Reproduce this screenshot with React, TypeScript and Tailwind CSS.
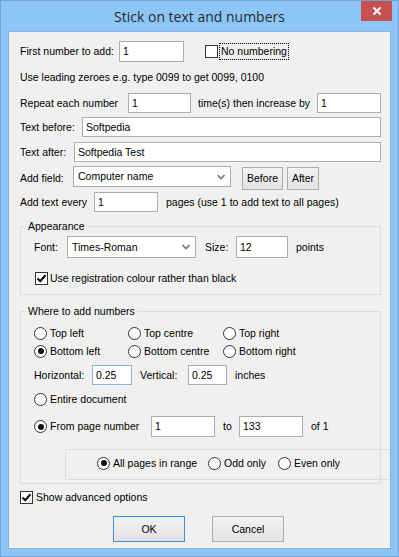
import type { ReactNode } from 'react';

const Box = ({ w, value, focus, flex }: { w?: string; value: string; focus?: boolean; flex?: boolean }) => (
  <div
    className={`h-full bg-white border ${focus ? 'border-[#7eb4ea]' : 'border-[#abadb3]'} flex items-center pl-[3px] ${flex ? 'flex-1' : ''} ${w ?? ''}`}
  >
    {value}
  </div>
);

const Select = ({ w, value }: { w: string; value: string }) => (
  <div className={`h-full bg-white border border-[#acacac] flex items-center justify-between pl-[4px] pr-[5px] ${w}`}>
    <span>{value}</span>
    <svg width="8" height="6" viewBox="0 0 8 6">
      <path d="M0.5 1 L4 4.5 L7.5 1" stroke="#7a7a7a" strokeWidth="1.6" fill="none" />
    </svg>
  </div>
);

const Check = ({ on }: { on?: boolean }) => (
  <span className="w-[13px] h-[13px] bg-white border border-[#333] flex items-center justify-center shrink-0">
    {on && (
      <svg width="11" height="11" viewBox="0 0 11 11">
        <path d="M1.5 5.5 L4.2 8.2 L9.5 2.2" stroke="#111" strokeWidth="2.2" fill="none" />
      </svg>
    )}
  </span>
);

const Radio = ({ on, children, w }: { on?: boolean; children: ReactNode; w?: string }) => (
  <div className={`flex items-center h-[14px] ${w ?? ''}`}>
    <span className="w-[13px] h-[13px] rounded-full bg-white border border-[#333] flex items-center justify-center shrink-0">
      {on && <span className="w-[6px] h-[6px] rounded-full bg-[#111]" />}
    </span>
    <span className="ml-[3px] whitespace-nowrap">{children}</span>
  </div>
);

const Btn = ({ w, children, primary, cls }: { w: string; children: ReactNode; primary?: boolean; cls?: string }) => (
  <div
    className={`h-full ${w} border ${primary ? 'border-[#3c8ee0]' : 'border-[#acacac]'} bg-gradient-to-b from-[#f2f2f2] to-[#e3e3e3] flex items-center justify-center ${cls ?? ''}`}
  >
    {children}
  </div>
);

export default function App() {
  return (
    <div className="w-[399px] h-[557px] bg-[#8cc6f7] border border-[#6fa6d4] flex flex-col overflow-hidden font-['Liberation_Sans',Arial,sans-serif] text-[10.5px] text-black leading-none">
      {/* title bar */}
      <div className="relative h-[30px] shrink-0 flex items-center justify-center">
        <span className="font-['Open_Sans',sans-serif] text-[14px] text-[#2a2a2a] mt-[1px]">Stick on text and numbers</span>
        <div className="absolute right-[6px] top-[-1px] w-[31px] h-[21px] bg-[#c75050] flex items-center justify-center">
          <svg width="10" height="10" viewBox="0 0 10 10">
            <path d="M1.5 1.5 L8.5 8.5 M8.5 1.5 L1.5 8.5" stroke="#fff" strokeWidth="2" />
          </svg>
        </div>
      </div>

      {/* client area */}
      <div className="mx-[7px] h-[518px] bg-[#f0f0f0] border border-[#7fb2de] flex flex-col pl-[11px] pr-[9px] overflow-hidden">
        <div className="flex items-center h-[21px] mt-[9px]">
          <span className="w-[99px]">First number to add:</span>
          <Box w="w-[65px]" value="1" />
          <span className="ml-[21px]"><Check /></span>
          <span className="ml-[1px] border border-dotted border-black px-[1px] h-[17px] flex items-center">No numbering</span>
        </div>

        <div className="flex items-center h-[18px] mt-[6px]">Use leading zeroes e.g. type 0099 to get 0099, 0100</div>

        <div className="flex items-center h-[20px] mt-[7px]">
          <span className="w-[108px]">Repeat each number</span>
          <Box w="w-[63px]" value="1" />
          <span className="ml-[7px] w-[119px]">time(s) then increase by</span>
          <Box w="w-[64px]" value="1" />
        </div>

        <div className="flex items-center h-[20px] mt-[4px]">
          <span className="w-[62px]">Text before:</span>
          <Box flex value="Softpedia" />
        </div>

        <div className="flex items-center h-[20px] mt-[5px]">
          <span className="w-[54px]">Text after:</span>
          <Box flex value="Softpedia Test" />
        </div>

        <div className="flex items-start h-[24px] mt-[4px]">
          <span className="w-[53px] self-center mt-[1px]">Add field:</span>
          <div className="h-[21px]"><Select w="w-[158px]" value="Computer name" /></div>
          <div className="h-[23px] mt-[1px] ml-[11px]"><Btn w="w-[41px]">Before</Btn></div>
          <div className="h-[23px] mt-[1px] ml-[4px]"><Btn w="w-[32px]">After</Btn></div>
        </div>

        <div className="flex items-center h-[20px] mt-[2px]">
          <span className="w-[74px]">Add text every</span>
          <Box w="w-[64px]" value="1" />
          <span className="ml-[8px]">pages (use 1 to add text to all pages)</span>
        </div>

        {/* Appearance */}
        <fieldset className="mt-[7px] border border-[#dcdcdc] pb-[9px]">
          <legend className="ml-[5px] px-[2px] leading-[14px]">Appearance</legend>
          <div className="flex items-center h-[22px] mt-[3px] pl-[13px]">
            <span className="w-[33px]">Font:</span>
            <Select w="w-[129px]" value="Times-Roman" />
            <span className="ml-[9px] w-[31px]">Size:</span>
            <Box w="w-[52px]" value="12" />
            <span className="ml-[8px]">points</span>
          </div>
          <div className="flex items-center h-[13px] mt-[14px] pl-[14px]">
            <Check on />
            <span className="ml-[2px]">Use registration colour rather than black</span>
          </div>
        </fieldset>

        {/* Where to add numbers */}
        <fieldset className="mt-[9px] border border-[#dcdcdc] pb-[3px] min-w-0">
          <legend className="ml-[5px] px-[2px] leading-[14px]">Where to add numbers</legend>
          <div className="pl-[13px] flex flex-col">
            <div className="flex mt-[8px]">
              <Radio w="w-[94px]">Top left</Radio>
              <Radio w="w-[95px]">Top centre</Radio>
              <Radio>Top right</Radio>
            </div>
            <div className="flex mt-[4px]">
              <Radio w="w-[94px]" on>Bottom left</Radio>
              <Radio w="w-[95px]">Bottom centre</Radio>
              <Radio>Bottom right</Radio>
            </div>
            <div className="flex items-center h-[20px] mt-[7px]">
              <span className="w-[58px]">Horizontal:</span>
              <Box w="w-[40px]" value="0.25" focus />
              <span className="ml-[8px] w-[48px]">Vertical:</span>
              <Box w="w-[39px]" value="0.25" />
              <span className="ml-[8px]">inches</span>
            </div>
            <div className="flex mt-[7px]">
              <Radio>Entire document</Radio>
            </div>
            <div className="flex items-center h-[21px] mt-[10px]">
              <Radio w="w-[117px]" on>From page number</Radio>
              <Box w="w-[64px]" value="1" />
              <span className="ml-[8px] w-[16px]">to</span>
              <Box w="w-[64px]" value="133" />
              <span className="ml-[8px]">of 1</span>
            </div>
          </div>
          <div className="ml-[44px] mt-[12px] w-[326px] h-[31px] border border-r-0 border-[#dcdcdc] pl-[31px] pt-[6px] flex items-start">
            <Radio w="w-[111px]" on>All pages in range</Radio>
            <Radio w="w-[70px]">Odd only</Radio>
            <Radio>Even only</Radio>
          </div>
        </fieldset>

        <div className="flex items-center h-[13px] mt-[7px]">
          <Check on />
          <span className="ml-[3px]">Show advanced options</span>
        </div>

        <div className="flex h-[26px] mt-[12px] pl-[93px]">
          <Btn w="w-[72px]" primary>OK</Btn>
          <Btn w="w-[72px]" cls="ml-[27px]">Cancel</Btn>
        </div>
      </div>
    </div>
  );
}
